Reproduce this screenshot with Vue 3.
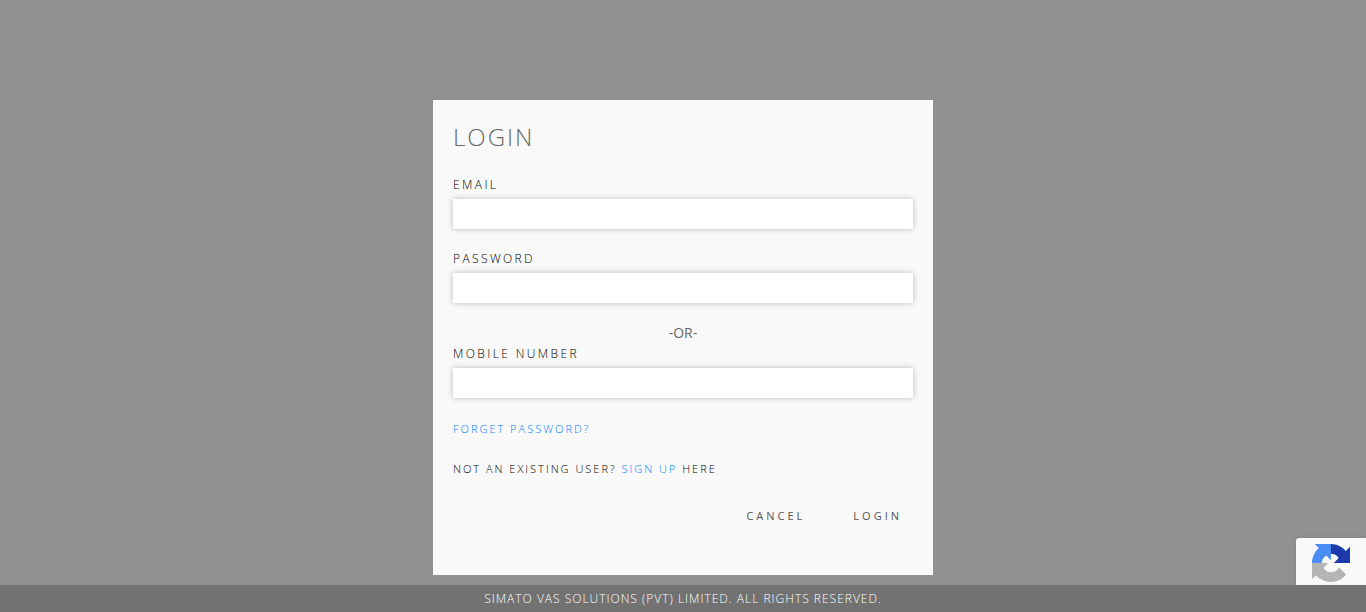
<script setup>
import { ref } from 'vue'

const email = ref('')
const password = ref('')
const mobile = ref('')
</script>

<template>
  <div class="page">
    <main class="stage">
      <form class="panel" @submit.prevent>
        <h1>LOGIN</h1>
        <div class="field">
          <label for="email">EMAIL</label>
          <input id="email" v-model="email" type="email" />
        </div>
        <div class="field">
          <label for="password">PASSWORD</label>
          <input id="password" v-model="password" type="password" />
        </div>
        <p class="or">-OR-</p>
        <div class="field">
          <label for="mobile">MOBILE NUMBER</label>
          <input id="mobile" v-model="mobile" type="tel" />
        </div>
        <p class="note"><a href="#forgot">FORGET PASSWORD?</a></p>
        <p class="note">NOT AN EXISTING USER? <a href="#signup">SIGN UP</a> HERE</p>
        <div class="actions">
          <button type="button">CANCEL</button>
          <button type="submit">LOGIN</button>
        </div>
      </form>
    </main>
    <aside class="badge" aria-label="reCAPTCHA">
      <svg viewBox="0 0 64 64" aria-hidden="true">
        <path fill="#1c3aa9" d="M64 31.955l-.033-1.37V4.687l-7.16 7.16C50.948 4.674 42.033.093 32.05.093c-10.4 0-19.622 4.96-25.458 12.64l11.736 11.86a15.55 15.55 0 0 1 4.754-5.334c2.05-1.6 4.952-2.906 8.968-2.906.485 0 .86.057 1.135.163 4.976.393 9.288 3.14 11.828 7.124l-8.307 8.307L64 31.953" />
        <path fill="#4a8df5" d="M31.862.094l-1.37.033H4.594l7.16 7.16C4.58 13.147 0 22.06 0 32.046c0 10.4 4.96 19.622 12.64 25.458L24.5 45.768a15.55 15.55 0 0 1-5.334-4.754c-1.6-2.05-2.906-4.952-2.906-8.968 0-.485.057-.86.163-1.135.393-4.976 3.14-9.288 7.124-11.828l8.307 8.307L31.86.095" />
        <path fill="#b5b5b5" d="M.001 32.045l.033 1.37v25.898l7.16-7.16c5.86 7.173 14.774 11.754 24.76 11.754 10.4 0 19.622-4.96 25.458-12.64l-11.736-11.86a15.55 15.55 0 0 1-4.754 5.334c-2.05 1.6-4.952 2.906-8.968 2.906-.485 0-.86-.057-1.135-.163-4.976-.393-9.288-3.14-11.828-7.124l8.307-8.307c-10.522.04-22.4.066-27.295-.005" />
      </svg>
    </aside>
    <footer>SIMATO VAS SOLUTIONS (PVT) LIMITED. ALL RIGHTS RESERVED.</footer>
  </div>
</template>

<style>
body {
  background: #919191;
}
</style>

<style scoped>
.page {
  display: flex;
  flex-direction: column;
  min-height: 100vh;
  font-family: "Open Sans", "Noto Sans", sans-serif;
}
.page * {
  box-sizing: border-box;
}
.stage {
  flex: 1;
  padding: 100px 16px 10px;
}
.panel {
  max-width: 500px;
  margin: 0 auto;
  padding: 20px 20px 50px;
  background: #f9f9f9;
  color: #000;
}
h1 {
  margin: 0 0 22px;
  font-size: 24px;
  font-weight: 300;
  line-height: 33px;
  letter-spacing: 2px;
  color: #666;
}
.field {
  margin-bottom: 20px;
}
label {
  display: block;
  margin-bottom: 4px;
  font-size: 12px;
  font-weight: 300;
  line-height: 20px;
  letter-spacing: 0.2em;
}
input {
  display: block;
  width: 100%;
  height: 30px;
  padding: 0 10px;
  border: 0;
  border-radius: 0;
  background: #fff;
  box-shadow: 0 0 6px rgba(0, 0, 0, 0.25);
  font: inherit;
  font-size: 14px;
}
.or {
  margin: 0 0 1px;
  font-size: 14px;
  line-height: 20px;
  text-align: center;
  color: #666;
}
.note {
  margin: 0 0 20px;
  font-size: 11px;
  font-weight: 300;
  line-height: 20px;
  letter-spacing: 2px;
}
.field + .note {
  padding-top: 1px;
}
a {
  color: #0080ff;
  text-decoration: none;
}
.actions {
  display: flex;
  justify-content: flex-end;
  gap: 26px;
  padding-top: 8px;
}
button {
  padding: 0 11px;
  border: 0;
  background: none;
  font: inherit;
  font-size: 11px;
  font-weight: 500;
  line-height: 18px;
  letter-spacing: 3px;
  color: #555;
}
.badge {
  position: fixed;
  right: 0;
  bottom: 14px;
  width: 70px;
  height: 60px;
  padding: 6px 16px;
  border-radius: 3px 0 0 3px;
  background: #f9f9f9;
  box-shadow: 0 0 5px #808080;
}
.badge svg {
  display: block;
  width: 38px;
  height: 38px;
}
footer {
  position: relative;
  padding: 5px 0 4px;
  background: #727272;
  color: #fff;
  font-size: 12px;
  font-weight: 300;
  line-height: 18px;
  letter-spacing: 1px;
  text-align: center;
}
</style>
